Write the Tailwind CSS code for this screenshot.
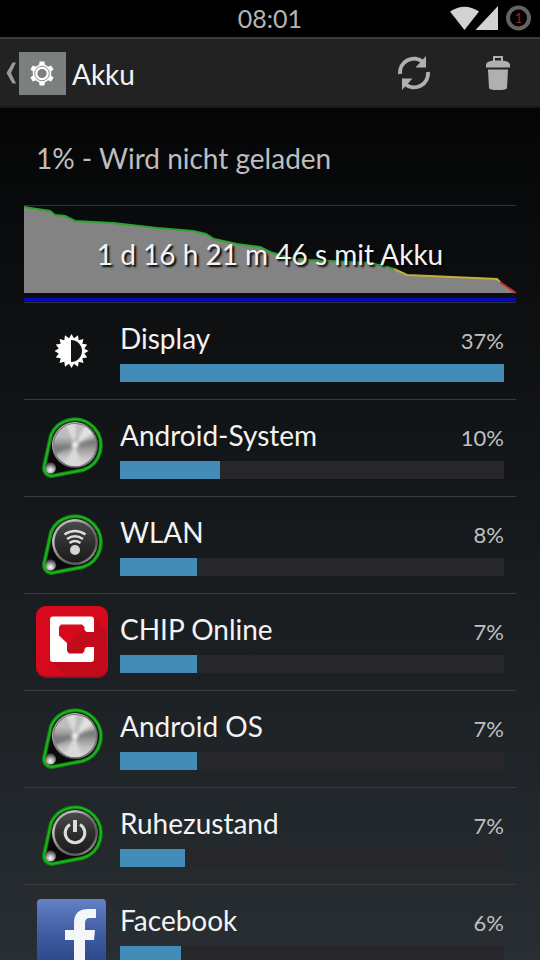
<!DOCTYPE html>
<html lang="de">
<head>
    <meta charset="UTF-8">
    <meta name="viewport" content="width=device-width, initial-scale=1.0">
    <title>Akku</title>
    <script src="https://cdn.jsdelivr.net/npm/@tailwindcss/browser@4"></script>
</head>
<body class="h-screen flex flex-col overflow-hidden bg-linear-to-b/srgb from-black to-[#282e33] font-[Lato,sans-serif] text-[#f3f3f3]">

    <!-- Shared icon parts -->
    <svg class="absolute size-0" aria-hidden="true">
        <defs>
            <linearGradient id="rim" x1="0" y1="0" x2="1" y2="1">
                <stop offset="0" stop-color="#8a8a8a"/>
                <stop offset=".25" stop-color="#c4bfc1"/>
                <stop offset=".5" stop-color="#7a7678"/>
                <stop offset=".75" stop-color="#5a5859"/>
                <stop offset="1" stop-color="#c9c9c9"/>
            </linearGradient>
            <linearGradient id="steel" x1="0" y1="0" x2="0" y2="1">
                <stop offset="0" stop-color="#c2c0c1"/>
                <stop offset=".3" stop-color="#bcbcbc"/>
                <stop offset=".52" stop-color="#8b8b8b"/>
                <stop offset=".75" stop-color="#bdbdbd"/>
                <stop offset="1" stop-color="#e0e0e0"/>
            </linearGradient>
            <linearGradient id="dark" x1="0" y1="0" x2="0" y2="1">
                <stop offset="0" stop-color="#4a4a4a"/>
                <stop offset=".55" stop-color="#2c2c2c"/>
                <stop offset="1" stop-color="#1c1c1c"/>
            </linearGradient>
            <radialGradient id="screw" cx=".5" cy=".7" r=".6">
                <stop offset="0" stop-color="#fff"/>
                <stop offset=".5" stop-color="#b0b0b0"/>
                <stop offset="1" stop-color="#4c4c4c"/>
            </radialGradient>
            <linearGradient id="fb" x1="0" y1="0" x2="0" y2="1">
                <stop offset="0" stop-color="#6480c6"/>
                <stop offset=".5" stop-color="#3f5da3"/>
                <stop offset="1" stop-color="#2a4585"/>
            </linearGradient>
            <filter id="soft"><feGaussianBlur stdDeviation="1.6"/></filter>
            <clipPath id="disc"><circle cx="39" cy="33" r="21"/></clipPath>
        </defs>

        <symbol id="knob" viewBox="0 0 72 72">
            <path d="M8 55 L15 23 A26 26 0 1 1 47 58 L16 64 A8 8 0 0 1 8 55Z" fill="#0a0a0a" stroke="#0f7a12" stroke-width="4"/>
            <path d="M8 55 L15 23 A26 26 0 1 1 47 58 L16 64 A8 8 0 0 1 8 55Z" fill="none" stroke="#1bb41b" stroke-width="2"/>
            <circle cx="14.500" cy="56" r="5.500" fill="url(#screw)"/>
            <circle cx="39" cy="33" r="23" fill="url(#rim)"/>
        </symbol>

        <symbol id="metal" viewBox="0 0 72 72">
            <use href="#knob" width="72" height="72"/>
            <circle cx="39" cy="33" r="22" fill="#777"/>
            <g clip-path="url(#disc)">
                <circle cx="39" cy="33" r="22" fill="url(#steel)"/>
                <g filter="url(#soft)">
                    <path d="M39 33 L28 8 L40 8Z" fill="#dcdcdc"/>
                    <path d="M39 33 L52 8 L62 18Z" fill="#e2e2e2"/>
                    <path d="M39 33 L12 34 L16 44Z" fill="#7b7b7b"/>
                    <path d="M39 33 L64 25 L64 33Z" fill="#7c7c7c"/>
                    <path d="M39 33 L24 60 L48 60Z" fill="#dadada"/>
                    <circle cx="39" cy="33" r="3" fill="#f4f4f4"/>
                </g>
            </g>
        </symbol>
    </svg>

    <!-- Status bar -->
    <div class="h-[37px] shrink-0 bg-black grid grid-cols-[1fr_auto_1fr] items-center px-2 text-[#b4b4b4]">
        <span class="col-start-2 text-[25px] leading-9 pb-[2px]">08:01</span>
        <svg class="justify-self-end mb-[2px]" width="82" height="28" viewBox="0 0 82 28" aria-hidden="true">
            <path d="M0 7.500 Q14.500 -2 29 7.500 L14.500 26Z" fill="#d2d2d2"/>
            <path d="M48 2 V26 H25.500Z" fill="#d2d2d2"/>
            <circle cx="68.500" cy="14" r="10.500" fill="none" stroke="#636363" stroke-width="4"/>
            <text x="68.500" y="19" text-anchor="middle" font-size="13" fill="#a51d1d">1</text>
        </svg>
    </div>

    <!-- Action bar -->
    <header class="h-[71px] shrink-0 flex items-center border-t-2 border-t-[#3a3a3a] border-b-2 border-b-[#191919] bg-[#222] pl-[6px] pr-6">
        <a href="#" class="flex items-center pt-[1px]" aria-label="Zurück">
            <svg class="mr-[2px]" width="11" height="22" viewBox="0 0 11 22">
                <path d="M10 0.500 H6.500 L0.500 11 L6.500 21.500 H10 L5 11Z" fill="#9a9a9a"/>
            </svg>
            <svg width="47" height="43" viewBox="0 0 47 43">
                <rect width="47" height="43" fill="#7c7f80"/>
                <g transform="translate(23 21.500)" fill="#fff">
                    <path d="M-3 -8 L-2.400 -12 H2.400 L3 -8Z"/>
                    <path d="M-3 -8 L-2.400 -12 H2.400 L3 -8Z" transform="rotate(60)"/>
                    <path d="M-3 -8 L-2.400 -12 H2.400 L3 -8Z" transform="rotate(120)"/>
                    <path d="M-3 -8 L-2.400 -12 H2.400 L3 -8Z" transform="rotate(180)"/>
                    <path d="M-3 -8 L-2.400 -12 H2.400 L3 -8Z" transform="rotate(240)"/>
                    <path d="M-3 -8 L-2.400 -12 H2.400 L3 -8Z" transform="rotate(300)"/>
                    <circle r="9.300"/>
                    <circle r="7.300" fill="none" stroke="#7c7f80" stroke-width=".9"/>
                    <circle r="4.600" fill="#7c7f80"/>
                </g>
            </svg>
        </a>
        <h1 class="ml-[6px] pt-[2px] text-[28px] leading-9">Akku</h1>
        <div class="ml-auto flex items-center gap-12">
            <button type="button" aria-label="Aktualisieren">
                <svg class="block" width="36" height="36" viewBox="0 0 36 36">
                    <g fill="none" stroke="#b0b0b0" stroke-width="4">
                        <path d="M4 19 A14 14 0 0 1 27 7"/>
                        <path d="M32 17 A14 14 0 0 1 9 29"/>
                    </g>
                    <path d="M30 1 V12.500 H19.500Z" fill="#b0b0b0"/>
                    <path d="M6 35 V23.500 H16.500Z" fill="#b0b0b0"/>
                </svg>
            </button>
            <button type="button" aria-label="Löschen">
                <svg class="block" width="36" height="36" viewBox="0 0 36 36">
                    <path d="M14 6 V2 H22 V6" fill="none" stroke="#b0b0b0" stroke-width="2"/>
                    <path d="M6 12.500 V10 Q6 6 14 5.500 H22 Q30 6 30 10 V12.500Z" fill="#b0b0b0"/>
                    <path d="M8 14.500 H28 L27 33 Q26.800 35 18 35 Q9.200 35 9 33Z" fill="#b0b0b0"/>
                </svg>
            </button>
        </div>
    </header>

    <main class="flex-1 overflow-y-auto [scrollbar-width:none] px-6">
        <p class="h-[97px] px-3 flex items-center pt-[3px] text-[28px] text-[#bebebe]">1% - Wird nicht geladen</p>

        <!-- Battery history -->
        <a href="#" class="relative block border-y border-[#303335]">
            <svg class="block w-full h-[88px]" viewBox="0 0 492 88" preserveAspectRatio="none" aria-hidden="true">
                <path d="M0 1 L26 5 L31 9 L41 10 L51 15 L89 17 L133 22 L169 25 L182 28 L190 33 L213 38 L236 41 L246 46 L266 52 L286 54 L346 57 L363 61 L383 69 L473 73 L492 87 H0Z" fill="#838383"/>
                <g fill="none" stroke-width="2">
                    <path d="M0 1 L26 5 L31 9 L41 10 L51 15 L89 17 L133 22 L169 25 L182 28 L190 33 L213 38 L236 41 L246 46 L266 52 L286 54 L346 57 L363 61 L370 63" stroke="#2da62d"/>
                    <path d="M370 63 L383 69 L473 73 L476 76" stroke="#bfb03a"/>
                    <path d="M476 76 L492 87" stroke="#cf2525"/>
                </g>
            </svg>
            <div class="mt-1 mb-[1px] h-[3px] bg-[#0808c0]"></div>
            <span class="absolute inset-x-0 top-[30px] text-center text-[28px] leading-9 [text-shadow:2px_2px_2px_#000]">1 d 16 h 21 m 46 s mit Akku</span>
        </a>

        <!-- Consumers -->
        <ul class="divide-y divide-[#383c3f]">
            <li>
                <a href="#" class="h-24 px-3 flex items-center gap-3">
                    <svg class="size-[72px] shrink-0" viewBox="0 0 72 72" aria-hidden="true">
                        <path id="sun" fill="#fff" d=""/>
                        <path d="M35 25 A11 11 0 0 1 35 47Z" fill="#111516"/>
                    </svg>
                    <div class="flex-1 pb-[1px]">
                        <div class="flex items-baseline justify-between leading-9">
                            <span class="text-[28px]">Display</span>
                            <span class="text-[22px] text-[#c0c0c0]">37%</span>
                        </div>
                        <div class="mt-[5px] h-[18px] bg-[#27262a]"><div class="h-full bg-[#438cb8]" style="width: 100%"></div></div>
                    </div>
                </a>
            </li>
            <li>
                <a href="#" class="h-24 px-3 flex items-center gap-3">
                    <svg class="size-[72px] shrink-0" viewBox="0 0 72 72" aria-hidden="true"><use href="#metal"/></svg>
                    <div class="flex-1 pb-[1px]">
                        <div class="flex items-baseline justify-between leading-9">
                            <span class="text-[28px]">Android-System</span>
                            <span class="text-[22px] text-[#c0c0c0]">10%</span>
                        </div>
                        <div class="mt-[5px] h-[18px] bg-[#27262a]"><div class="h-full bg-[#438cb8]" style="width: 26%"></div></div>
                    </div>
                </a>
            </li>
            <li>
                <a href="#" class="h-24 px-3 flex items-center gap-3">
                    <svg class="size-[72px] shrink-0" viewBox="0 0 72 72" aria-hidden="true">
                        <use href="#knob"/>
                        <circle cx="39" cy="33" r="20.500" fill="url(#dark)"/>
                        <g fill="none" stroke="#dcdcdc" stroke-width="2.600">
                            <path d="M28.500 25.500 Q39 18.500 49.500 25.500"/>
                            <path d="M31 30 Q39 24.500 47 30"/>
                            <path d="M33.500 34 Q39 30 44.500 34"/>
                        </g>
                        <circle cx="39" cy="41" r="5" fill="#d4d4d4"/>
                    </svg>
                    <div class="flex-1 pb-[1px]">
                        <div class="flex items-baseline justify-between leading-9">
                            <span class="text-[28px]">WLAN</span>
                            <span class="text-[22px] text-[#c0c0c0]">8%</span>
                        </div>
                        <div class="mt-[5px] h-[18px] bg-[#27262a]"><div class="h-full bg-[#438cb8]" style="width: 20%"></div></div>
                    </div>
                </a>
            </li>
            <li>
                <a href="#" class="h-24 px-3 flex items-center gap-3">
                    <svg class="size-[72px] shrink-0" viewBox="0 0 72 72" aria-hidden="true">
                        <rect width="72" height="72" rx="10" fill="#a80a18"/>
                        <rect width="72" height="70" rx="10" fill="#d60a1c"/>
                        <path d="M58 12 L71 25 V60 Q71 69 62 69 H28 L15 56Z" fill="#c20b1b"/>
                        <path d="M17 10.500 H55 Q58 10.500 58 13.500 V26 H50.500 L48.500 24 V21 L46 18.500 H25 L23 21 V29.500 L31 37 V45 L33 47.500 H46.500 L48.500 45 V43 L50.500 41 H58 V53 Q58 56 55 56 H17 Q14 56 14 53 V13.500 Q14 10.500 17 10.500Z" fill="#fff"/>
                    </svg>
                    <div class="flex-1 pb-[1px]">
                        <div class="flex items-baseline justify-between leading-9">
                            <span class="text-[28px]">CHIP Online</span>
                            <span class="text-[22px] text-[#c0c0c0]">7%</span>
                        </div>
                        <div class="mt-[5px] h-[18px] bg-[#27262a]"><div class="h-full bg-[#438cb8]" style="width: 20%"></div></div>
                    </div>
                </a>
            </li>
            <li>
                <a href="#" class="h-24 px-3 flex items-center gap-3">
                    <svg class="size-[72px] shrink-0" viewBox="0 0 72 72" aria-hidden="true"><use href="#metal"/></svg>
                    <div class="flex-1 pb-[1px]">
                        <div class="flex items-baseline justify-between leading-9">
                            <span class="text-[28px]">Android OS</span>
                            <span class="text-[22px] text-[#c0c0c0]">7%</span>
                        </div>
                        <div class="mt-[5px] h-[18px] bg-[#27262a]"><div class="h-full bg-[#438cb8]" style="width: 20%"></div></div>
                    </div>
                </a>
            </li>
            <li>
                <a href="#" class="h-24 px-3 flex items-center gap-3">
                    <svg class="size-[72px] shrink-0" viewBox="0 0 72 72" aria-hidden="true">
                        <use href="#knob"/>
                        <circle cx="39" cy="33" r="20.500" fill="url(#dark)"/>
                        <path d="M34 24.500 A9.800 9.800 0 1 0 44 24.500" fill="none" stroke="#dcdcdc" stroke-width="3"/>
                        <path d="M39 20 V32" stroke="#dcdcdc" stroke-width="4"/>
                    </svg>
                    <div class="flex-1 pb-[1px]">
                        <div class="flex items-baseline justify-between leading-9">
                            <span class="text-[28px]">Ruhezustand</span>
                            <span class="text-[22px] text-[#c0c0c0]">7%</span>
                        </div>
                        <div class="mt-[5px] h-[18px] bg-[#27262a]"><div class="h-full bg-[#438cb8]" style="width: 17%"></div></div>
                    </div>
                </a>
            </li>
            <li>
                <a href="#" class="h-24 px-3 flex items-center gap-3">
                    <svg class="size-[72px] shrink-0" viewBox="0 0 72 72" aria-hidden="true">
                        <rect x="1" y="2" width="69" height="69" rx="4" fill="url(#fb)"/>
                        <path d="M38 71 V43 H29 V33 H38 V26 Q38 12 52 12 H60 V21 H54 Q49 21 49 26 V33 H59 L58 43 H49 V71Z" fill="#f4f6fa"/>
                    </svg>
                    <div class="flex-1 pb-[1px]">
                        <div class="flex items-baseline justify-between leading-9">
                            <span class="text-[28px]">Facebook</span>
                            <span class="text-[22px] text-[#c0c0c0]">6%</span>
                        </div>
                        <div class="mt-[5px] h-[18px] bg-[#27262a]"><div class="h-full bg-[#438cb8]" style="width: 16%"></div></div>
                    </div>
                </a>
            </li>
        </ul>
    </main>

    <script>
        // Brightness icon: 16-pointed sun
        let d = '';
        for (let i = 0; i < 32; i++) {
            const r = i % 2 ? 13 : 17;
            const a = i * Math.PI / 16;
            d += (i ? 'L' : 'M') + (35.5 + r * Math.sin(a)).toFixed(1) + ' ' + (36 - r * Math.cos(a)).toFixed(1);
        }
        document.getElementById('sun').setAttribute('d', d + 'Z');
    </script>

</body>
</html>
